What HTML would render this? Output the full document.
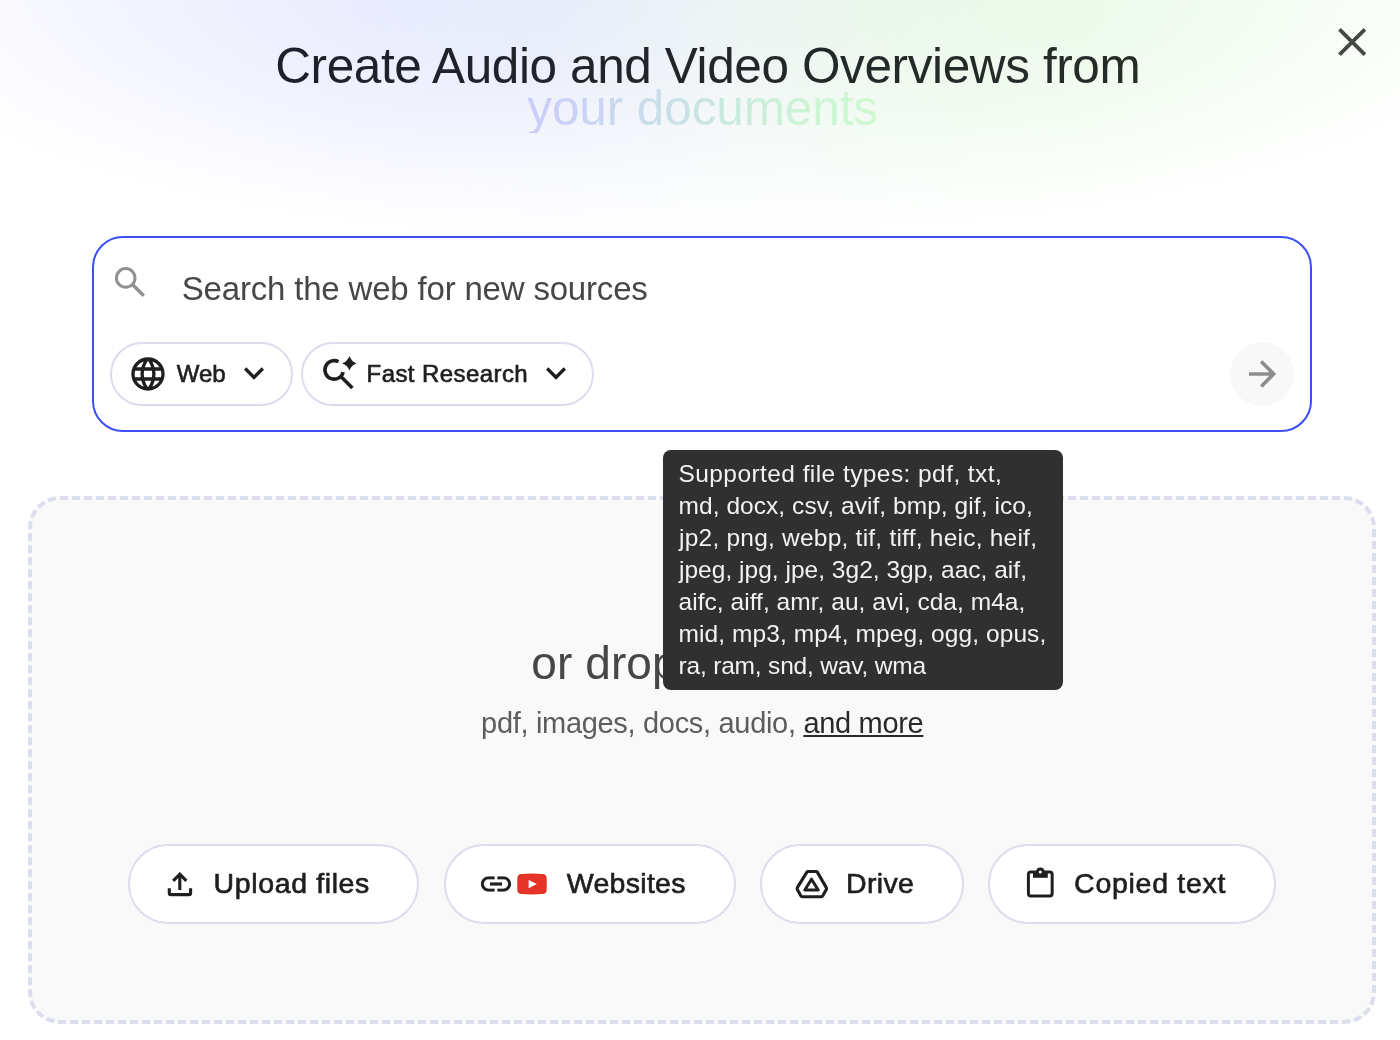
<!DOCTYPE html>
<html lang="en">
<head>
<meta charset="utf-8">
<title>Add sources</title>
<style>
*{box-sizing:border-box;margin:0;padding:0}
html,body{width:1400px;height:1040px;overflow:hidden;background:#fff}
body{position:relative;font-family:"Liberation Sans",sans-serif;color:#1f1f1f}
.abs{position:absolute}
.t{position:absolute;white-space:nowrap;line-height:1;will-change:opacity}
#bg{left:0;top:0;width:1400px;height:300px;
 background:
  radial-gradient(ellipse 870px 262px at 700px -15px, rgba(255,255,255,0) 0%, rgba(255,255,255,0.12) 25%, rgba(255,255,255,0.45) 55%, rgba(255,255,255,0.8) 80%, #fff 100%),
  linear-gradient(to right, #e1e5fd 0%, #e1e5fd 26%, #e7ecfa 41%, #edf4f4 52%, #e9f7ea 63%, #e3f9e1 77%, #e5f9e3 100%);
}
#h1{left:276px;top:41px;font-size:48px;
 background:linear-gradient(to right,#1e1f2c,#262d27);-webkit-background-clip:text;background-clip:text;color:transparent}
#h2{left:527px;top:84px;font-size:48px;
 background:linear-gradient(to right,#c9cdfb 0%,#c9d5f4 20%,#c8deea 36%,#c9e8df 55%,#cbf2d5 75%,#cefacf 100%);-webkit-background-clip:text;background-clip:text;color:transparent}
#search{left:92px;top:236px;width:1220px;height:196px;border:2px solid #3b4ff4;border-radius:31px;background:#fff}
#ph{left:182px;top:272px;font-size:32px;color:#474747}
.chip{position:absolute;top:342px;height:64px;border:2px solid #dadeec;border-radius:32px;background:#fff}
.chiptxt{font-size:24px;color:#1f1f1f;-webkit-text-stroke:0.65px #1f1f1f}
#go{left:1230px;top:342px;width:64px;height:64px;border-radius:32px;background:#f8f8f8}
#drop{left:28px;top:496px;width:1348px;height:528px;border:4px dashed #dbdeec;border-radius:32px;background:#f9f9f9}
#big{left:532px;top:640px;font-size:45px;color:#444746}
#sub{color:#5c5d5e}
#sub u{color:#2a2a2a;text-decoration-thickness:2px;text-underline-offset:2px}
.btn{position:absolute;top:844px;height:80px;border:2px solid #dbdeec;border-radius:40px;background:#fff}
.btntxt{font-size:29px;color:#1f1f1f;-webkit-text-stroke:0.65px #1f1f1f}
#tip{left:663px;top:450px;width:400px;height:240px;border-radius:8px;background:#303030}
.tl{position:absolute;will-change:opacity;white-space:nowrap;font-size:24px;line-height:1;color:#f2f2f2}
</style>
</head>
<body>
<div id="bg" class="abs"></div>


<!-- close -->
<svg class="abs" style="left:1336px;top:26px" width="32" height="32" viewBox="0 0 32 32"><path d="M3.5 3.3 L28.9 28.7 M28.9 3.3 L3.5 28.7" stroke="#454845" stroke-width="3.8" fill="none"/></svg>

<div id="search" class="abs"></div>
<!-- search icon -->
<svg class="abs" style="left:112px;top:264px" width="36" height="36" viewBox="0 0 36 36"><circle cx="13.7" cy="13.9" r="9.3" stroke="#919191" stroke-width="3" fill="none"/><path d="M20.5 20.5 L31.8 31.8" stroke="#919191" stroke-width="3.4" fill="none"/></svg>

<div class="chip" style="left:110px;width:182.6px"></div>
<div class="chip" style="left:301px;width:293px"></div>

<div id="go" class="abs"></div>

<div id="drop" class="abs"></div>


<div class="btn" style="left:128px;width:291px"></div>
<div class="btn" style="left:444px;width:292px"></div>
<div class="btn" style="left:760px;width:204px"></div>
<div class="btn" style="left:988px;width:288px"></div>


<!-- globe -->
<svg class="abs" style="left:127.8px;top:353.8px" width="40" height="40" viewBox="0 0 24 24"><path fill="#1f1f1f" d="M11.99 2C6.47 2 2 6.48 2 12s4.47 10 9.99 10C17.52 22 22 17.52 22 12S17.52 2 11.99 2zm6.93 6h-2.95c-.32-1.25-.78-2.45-1.38-3.56 1.84.63 3.37 1.91 4.33 3.56zM12 4.04c.83 1.2 1.48 2.53 1.91 3.96h-3.82c.43-1.43 1.08-2.76 1.91-3.96zM4.26 14C4.1 13.36 4 12.69 4 12s.1-1.36.26-2h3.38c-.08.66-.14 1.32-.14 2 0 .68.06 1.34.14 2H4.26zm.82 2h2.95c.32 1.25.78 2.45 1.38 3.56-1.84-.63-3.37-1.9-4.33-3.56zm2.95-8H5.08c.96-1.66 2.49-2.93 4.33-3.56C8.81 5.55 8.35 6.75 8.03 8zM12 19.96c-.83-1.2-1.48-2.53-1.91-3.96h3.82c-.43 1.43-1.08 2.76-1.91 3.96zM14.34 14H9.66c-.09-.66-.16-1.32-.16-2 0-.68.07-1.35.16-2h4.68c.09.65.16 1.32.16 2 0 .68-.07 1.34-.16 2zm.25 5.56c.6-1.11 1.06-2.31 1.38-3.56h2.95c-.96 1.65-2.49 2.93-4.33 3.56zM16.36 14c.08-.66.14-1.32.14-2 0-.68-.06-1.34-.14-2h3.38c.16.64.26 1.31.26 2s-.1 1.36-.26 2h-3.38z"/></svg>
<!-- chevrons -->
<svg class="abs" style="left:234.3px;top:352.9px" width="40" height="40" viewBox="0 0 24 24"><path fill="#1f1f1f" d="M16.59 8.59L12 13.17 7.41 8.59 6 10l6 6 6-6z"/></svg>
<svg class="abs" style="left:536px;top:352.6px" width="40" height="40" viewBox="0 0 24 24"><path fill="#1f1f1f" d="M16.59 8.59L12 13.17 7.41 8.59 6 10l6 6 6-6z"/></svg>
<!-- search spark -->
<svg class="abs" style="left:318px;top:352px" width="44" height="44" viewBox="0 0 44 44">
<path d="M20.54 9.73 A9.25 9.25 0 1 0 25.17 20.14" stroke="#1f1f1f" stroke-width="3.6" fill="none"/>
<path d="M22.6 24.3 L34.4 36.1" stroke="#1f1f1f" stroke-width="3.5" fill="none"/>
<path d="M31.4 3.9 Q33.3 9.3 38.7 11.2 Q33.3 13.1 31.4 18.5 Q29.5 13.1 24.1 11.2 Q29.5 9.3 31.4 3.9 Z" fill="#1f1f1f"/>
</svg>
<!-- go arrow -->
<svg class="abs" style="left:1240px;top:352px" width="44" height="44" viewBox="0 0 44 44"><path d="M9 22 H32.5 M21.2 9.6 L33.6 22 L21.2 34.4" stroke="#8e8e8e" stroke-width="3.6" fill="none"/></svg>
<!-- upload -->
<svg class="abs" style="left:160px;top:864px" width="40" height="40" viewBox="0 0 40 40"><path d="M9.3 24.3 V28.9 Q9.3 30.6 11 30.6 H28.9 Q30.6 30.6 30.6 28.9 V24.3 M19.8 26 V10.5 M13.2 16.8 L19.8 10.2 L26.4 16.8" stroke="#1f1f1f" stroke-width="3.1" fill="none"/></svg>
<!-- link -->
<svg class="abs" style="left:477.8px;top:865.7px" width="36" height="36" viewBox="0 0 24 24"><path fill="#1f1f1f" stroke="#1f1f1f" stroke-width="0.1" d="M3.9 12c0-1.71 1.39-3.1 3.1-3.1h4V7H7c-2.76 0-5 2.24-5 5s2.24 5 5 5h4v-1.9H7c-1.71 0-3.1-1.39-3.1-3.1zM8 13h8v-2H8v2zm9-6h-4v1.9h4c1.71 0 3.1 1.39 3.1 3.1s-1.39 3.1-3.1 3.1h-4V17h4c2.76 0 5-2.24 5-5s-2.24-5-5-5z"/></svg>
<!-- youtube -->
<svg class="abs" style="left:514px;top:870px" width="36" height="28" viewBox="0 0 36 28"><path d="M7.2 3.9 Q18 3.1 28.8 3.9 Q32.3 4.2 32.6 7.6 Q33 14 32.6 20.4 Q32.3 23.8 28.8 24.1 Q18 24.9 7.2 24.1 Q3.7 23.8 3.4 20.4 Q3 14 3.4 7.6 Q3.7 4.2 7.2 3.9 Z" fill="#e63327"/><path d="M14.6 10 L22.8 14.1 L14.6 18.2 Z" fill="#fff"/></svg>
<!-- drive -->
<svg class="abs" style="left:790px;top:864px" width="44" height="40" viewBox="0 0 44 40"><path d="M18 7.5 H26.2 Q26.9 7.5 27.3 8.1 L36.3 23.6 Q36.8 24.6 36.3 25.5 L32.8 31.8 Q32.3 32.7 31.3 32.7 H12.3 Q11.3 32.7 10.8 31.8 L7.3 25.5 Q6.8 24.6 7.3 23.6 L16.9 8.1 Q17.3 7.5 18 7.5 Z" stroke="#1f1f1f" stroke-width="3.1" stroke-linejoin="round" fill="none"/><path d="M21.5 15.2 L28.2 26 H14.8 Z" stroke="#1f1f1f" stroke-width="3" stroke-linejoin="round" fill="none"/></svg>
<!-- clipboard -->
<svg class="abs" style="left:1020px;top:862px" width="40" height="40" viewBox="0 0 40 40"><rect x="8.4" y="9.9" width="23.75" height="24" rx="2.4" stroke="#1f1f1f" stroke-width="3" fill="none"/><path d="M13 9 H27.8 V15.8 H13 Z" fill="#1f1f1f"/><circle cx="20.3" cy="9.5" r="4.1" fill="#1f1f1f"/><circle cx="20.3" cy="10" r="1.5" fill="#fff"/></svg>

<div id="h1" class="t" style="left:275.20px;top:41.10px;font-size:49.5px;letter-spacing:-0.389px">Create Audio and Video Overviews from</div>
<div id="h2" class="t" style="left:527.30px;top:83.10px;font-size:49.5px;letter-spacing:-0.108px">your documents</div>
<div id="ph" class="t" style="left:181.80px;top:271.77px;font-size:33px;letter-spacing:-0.186px">Search the web for new sources</div>
<div id="webtxt" class="t chiptxt" style="left:176.80px;top:361.68px;font-size:24px;letter-spacing:-0.100px">Web</div>
<div id="frtxt" class="t chiptxt" style="left:366.60px;top:361.68px;font-size:24px;letter-spacing:0.417px">Fast Research</div>
<div id="big" class="t" style="left:531.20px;top:639.96px;font-size:46px;letter-spacing:0.120px">or drop your files</div>
<div id="sub" class="t" style="left:481.10px;top:709.15px;font-size:29px;letter-spacing:-0.315px">pdf, images, docs, audio, <u>and more</u></div>
<div id="b1" class="t btntxt" style="left:213.60px;top:868.87px;font-size:28.5px;letter-spacing:0.618px">Upload files</div>
<div id="b2" class="t btntxt" style="left:566.80px;top:868.87px;font-size:28.5px;letter-spacing:0.286px">Websites</div>
<div id="b3" class="t btntxt" style="left:846.00px;top:868.87px;font-size:28.5px;letter-spacing:0.350px">Drive</div>
<div id="b4" class="t btntxt" style="left:1074.10px;top:868.87px;font-size:28.5px;letter-spacing:0.720px">Copied text</div>
<div id="tip" class="abs"></div>
<div id="l1" class="tl" style="left:678.50px;top:462.26px;font-size:24.5px;letter-spacing:0.427px">Supported file types: pdf, txt,</div>
<div id="l2" class="tl" style="left:678.50px;top:494.26px;font-size:24.5px;letter-spacing:0.059px">md, docx, csv, avif, bmp, gif, ico,</div>
<div id="l3" class="tl" style="left:679.00px;top:526.26px;font-size:24.5px;letter-spacing:0.227px">jp2, png, webp, tif, tiff, heic, heif,</div>
<div id="l4" class="tl" style="left:679.00px;top:558.26px;font-size:24.5px;letter-spacing:0.018px">jpeg, jpg, jpe, 3g2, 3gp, aac, aif,</div>
<div id="l5" class="tl" style="left:678.50px;top:590.26px;font-size:24.5px;letter-spacing:0.041px">aifc, aiff, amr, au, avi, cda, m4a,</div>
<div id="l6" class="tl" style="left:678.50px;top:622.26px;font-size:24.5px;letter-spacing:0.093px">mid, mp3, mp4, mpeg, ogg, opus,</div>
<div id="l7" class="tl" style="left:678.50px;top:654.26px;font-size:24.5px;letter-spacing:-0.181px">ra, ram, snd, wav, wma</div>
</body>
</html>
